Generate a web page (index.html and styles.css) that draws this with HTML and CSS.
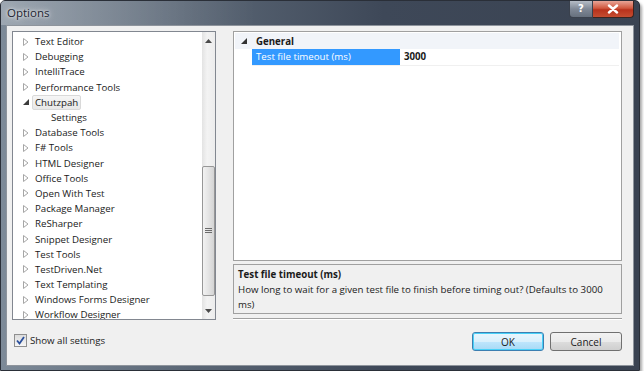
FILE: index.html
```html
<!DOCTYPE html>
<html lang="en">
<head>
    <meta charset="UTF-8">
    <title>Options</title>
    <link rel="stylesheet" href="styles.css">
</head>
<body>
    <div class="window">
        <div class="titlebar">
            <span class="title">Options</span>
            <div class="caption-buttons">
                <div class="btn-help">?</div>
                <div class="btn-close">
                    <svg width="14" height="10" viewBox="0 0 14 10"><path d="M3 1.5 L11 8.5 M11 1.5 L3 8.5" stroke="#fff" stroke-width="2.4" stroke-linecap="round"/></svg>
                </div>
            </div>
        </div>

        <div class="client">
            <div class="tree">
                <ul class="tree-list" id="tree-list"></ul>
                <div class="scrollbar">
                    <div class="arrow">
                        <svg width="7" height="4" viewBox="0 0 7 4"><path d="M0 4 L3.5 0 L7 4 Z" fill="#4a4a4a"/></svg>
                    </div>
                    <div class="track">
                        <div class="thumb">
                            <svg width="7" height="6" viewBox="0 0 7 6"><path d="M0 0.5 H7 M0 2.5 H7 M0 4.5 H7" stroke="#6b6b6b" stroke-width="1"/></svg>
                        </div>
                    </div>
                    <div class="arrow">
                        <svg width="7" height="4" viewBox="0 0 7 4"><path d="M0 0 L3.5 4 L7 0 Z" fill="#4a4a4a"/></svg>
                    </div>
                </div>
            </div>

            <div class="settings">
                <div class="grid">
                    <div class="grid-category">
                        <svg class="cat-arrow" width="6" height="6" viewBox="0 0 6 6"><path d="M6 0 L6 6 L0 6 Z" fill="#333"/></svg>
                        <span>General</span>
                    </div>
                    <div class="grid-row">
                        <div class="grid-name">Test file timeout (ms)</div>
                        <div class="grid-value">3000</div>
                    </div>
                </div>
                <div class="description">
                    <div class="desc-title">Test file timeout (ms)</div>
                    <div class="desc-text">How long to wait for a given test file to finish before timing out? (Defaults to 3000 ms)</div>
                </div>
                <div class="separator"></div>
            </div>

            <div class="footer">
                <label class="show-all">
                    <span class="checkbox">
                        <svg width="9" height="9" viewBox="0 0 9 9"><path d="M1 4.5 L3.5 7.5 L8 1" stroke="#2a4f9c" stroke-width="1.8" fill="none"/></svg>
                    </span>
                    Show all settings
                </label>
                <div class="buttons">
                    <button class="btn btn-default">OK</button>
                    <button class="btn">Cancel</button>
                </div>
            </div>
        </div>
    </div>

    <script>
        const items = [
            { name: 'Text Editor' },
            { name: 'Debugging' },
            { name: 'IntelliTrace' },
            { name: 'Performance Tools' },
            { name: 'Chutzpah', open: true },
            { name: 'Settings', child: true },
            { name: 'Database Tools' },
            { name: 'F# Tools' },
            { name: 'HTML Designer' },
            { name: 'Office Tools' },
            { name: 'Open With Test' },
            { name: 'Package Manager' },
            { name: 'ReSharper' },
            { name: 'Snippet Designer' },
            { name: 'Test Tools' },
            { name: 'TestDriven.Net' },
            { name: 'Text Templating' },
            { name: 'Windows Forms Designer' },
            { name: 'Workflow Designer' }
        ];

        const closedIcon = '<svg width="6" height="8" viewBox="0 0 6 8"><path d="M0.5 0.5 L5 4 L0.5 7.5 Z" fill="#fff" stroke="#a6a6a6" stroke-width="1"/></svg>';
        const openIcon = '<svg width="6" height="6" viewBox="0 0 6 6"><path d="M6 0 L6 6 L0 6 Z" fill="#3c3c3c"/></svg>';

        const list = document.getElementById('tree-list');
        items.forEach(item => {
            const li = document.createElement('li');
            li.className = item.child ? 'tree-item child' : 'tree-item';
            const icon = item.child ? '' : (item.open ? openIcon : closedIcon);
            li.innerHTML = `<span class="expander">${icon}</span><span class="label${item.open ? ' current' : ''}">${item.name}</span>`;
            list.appendChild(li);
        });
    </script>
</body>
</html>
```

FILE: styles.css
```css
body {
    margin: 0;
    background: #ffffff;
    font-family: 'Open Sans', 'Noto Sans', sans-serif;
    font-size: 9.7px;
    color: #1a1a1a;
}

.window {
    width: 640px;
    height: 371px;
    background: linear-gradient(to right, #7d8a98 0%, #5a6675 30%, #3e4858 60%, #3a4352 100%);
    border-radius: 5px 5px 0 0;
    display: flex;
    flex-direction: column;
    box-shadow: 2px 3px 3px rgba(0, 0, 0, 0.35);
    box-sizing: border-box;
    border: 1px solid #2a2f38;
}

.titlebar {
    height: 24px;
    display: flex;
    justify-content: space-between;
    align-items: flex-start;
    background: linear-gradient(to right, rgba(255,255,255,0.25), rgba(255,255,255,0) 40%);
}

.title {
    font-family: 'Open Sans', sans-serif;
    font-size: 11.5px;
    color: #1d2530;
    padding: 4px 0 0 6px;
    text-shadow: 0 0 6px rgba(255, 255, 255, 0.9), 0 0 3px rgba(255, 255, 255, 0.8);
}

.caption-buttons {
    display: flex;
    margin-right: 5px;
}

.btn-help {
    width: 22px;
    height: 16px;
    background: linear-gradient(#b5bcc6, #7f8896 50%, #66707e);
    border: 1px solid #3a414d;
    border-top: none;
    border-radius: 0 0 0 4px;
    color: #fff;
    font-family: 'DejaVu Sans', sans-serif;
    font-size: 10px;
    font-weight: bold;
    text-align: center;
    line-height: 15px;
}

.btn-close {
    width: 40px;
    height: 16px;
    background: linear-gradient(#e8a597, #d0583f 45%, #b8321c 55%, #c54d31);
    border: 1px solid #3a2420;
    border-top: none;
    border-left: none;
    border-radius: 0 0 4px 0;
    display: flex;
    align-items: center;
    justify-content: center;
}

.client {
    flex: 1;
    margin: 0 5px 4px 5px;
    background: #f0f0f0;
    border: 1px solid #8e949c;
    display: grid;
    grid-template-columns: 204px 1fr;
    grid-template-rows: 289px 1fr;
    column-gap: 17px;
    padding: 5px 11px 0 5px;
}

/* tree */

.tree {
    border: 1px solid #828790;
    background: #ffffff;
    display: flex;
    overflow: hidden;
}

.tree-list {
    flex: 1;
    list-style-type: none;
    margin: 0;
    padding: 2px 0 0 0;
}

.tree-item {
    height: 15.2px;
    display: flex;
    align-items: center;
    white-space: nowrap;
}

.expander {
    width: 8px;
    margin-left: 10px;
    margin-right: 1px;
    display: flex;
    align-items: center;
}

.tree-item.child .expander {
    margin-left: 26px;
}

.label {
    padding: 0 2px;
    line-height: 13px;
    border: 1px solid transparent;
    border-radius: 2px;
}

.label.current {
    background: linear-gradient(#f6f6f6, #e8e8e8);
    border-color: #d9d9d9;
}

.scrollbar {
    width: 13px;
    background: linear-gradient(to right, #e3e3e3, #f3f3f3 40%, #ececec);
    display: flex;
    flex-direction: column;
}

.arrow {
    height: 17px;
    display: flex;
    align-items: center;
    justify-content: center;
}

.track {
    flex: 1;
    display: flex;
    flex-direction: column;
    justify-content: flex-end;
    padding-bottom: 6px;
}

.thumb {
    height: 130px;
    border: 1px solid #979797;
    border-radius: 2px;
    background: linear-gradient(to right, #f2f2f2, #e4e4e4 50%, #d4d4d4);
    display: flex;
    align-items: center;
    justify-content: center;
    box-sizing: border-box;
}

/* property grid */

.settings {
    display: flex;
    flex-direction: column;
}

.grid {
    height: 231px;
    border: 1px solid #a0a0a0;
    background: #ffffff;
    box-sizing: border-box;
    padding: 1px 2px 0 1px;
}

.grid-category {
    height: 16px;
    background: #f1f4f9;
    display: flex;
    align-items: center;
    font-weight: bold;
}

.cat-arrow {
    margin: 0 9px 0 6px;
}

.grid-row {
    height: 16px;
    display: flex;
    border-bottom: 1px solid #f0f0f0;
    margin-left: 17px;
}

.grid-name {
    width: 148px;
    background: #3399ff;
    color: #ffffff;
    padding-left: 4px;
    line-height: 16px;
    box-sizing: border-box;
}

.grid-value {
    padding-left: 4px;
    font-weight: bold;
    line-height: 16px;
}

.description {
    margin-top: 3px;
    height: 50px;
    border: 1px solid #a0a0a0;
    box-sizing: border-box;
    padding: 2px 4px;
    line-height: 15px;
}

.desc-title {
    font-weight: bold;
}

.separator {
    margin-top: 4px;
    border-top: 1px solid #a0a0a0;
    border-bottom: 1px solid #ffffff;
}

/* footer */

.footer {
    grid-column: 1 / 3;
    display: flex;
    justify-content: space-between;
    align-items: flex-start;
    padding-top: 12px;
}

.show-all {
    display: flex;
    align-items: center;
    gap: 3px;
    margin-top: 2px;
    margin-left: 2px;
}

.checkbox {
    width: 11px;
    height: 11px;
    border: 1px solid #8f8f8f;
    background: linear-gradient(#dcdcdc, #f6f6f6);
    display: flex;
    align-items: center;
    justify-content: center;
}

.buttons {
    display: flex;
    gap: 6px;
}

.btn {
    width: 72px;
    height: 19px;
    font-family: 'Open Sans', sans-serif;
    font-size: 10px;
    color: #1a1a1a;
    border: 1px solid #707070;
    border-radius: 3px;
    background: linear-gradient(#f2f2f2, #ebebeb 50%, #dddddd 50%, #cfcfcf);
    padding: 0;
}

.btn-default {
    border-color: #3c7fb1;
    background: linear-gradient(#eaf6fd, #d9f0fc 50%, #bee6fd 50%, #a7d9f5);
    box-shadow: inset 0 0 0 1px #48d1f8;
}
```
